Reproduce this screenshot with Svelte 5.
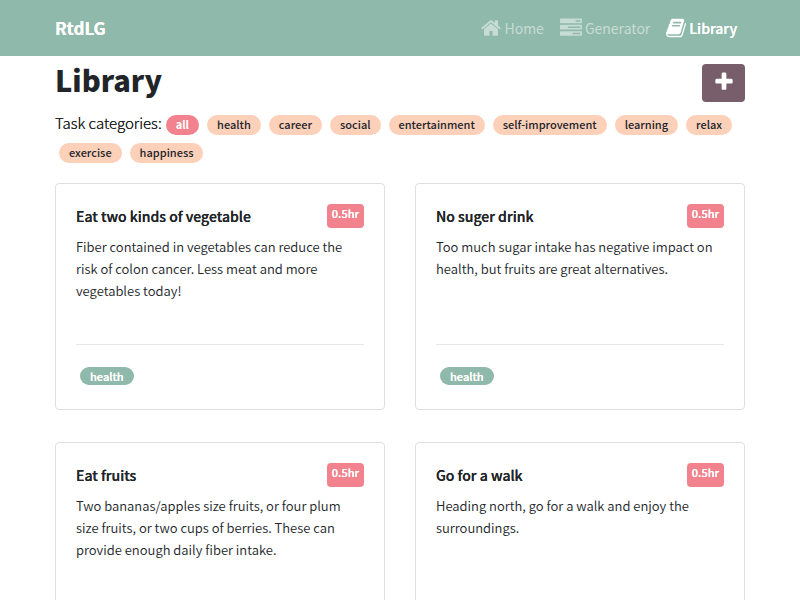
<script>
  const categories = ['all', 'health', 'career', 'social', 'entertainment', 'self-improvement', 'learning', 'relax', 'exercise', 'happiness'];
  let active = $state('all');
  const tasks = [
    { title: 'Eat two kinds of vegetable', time: '0.5hr', tag: 'health', text: 'Fiber contained in vegetables can reduce the risk of colon cancer. Less meat and more vegetables today!' },
    { title: 'No suger drink', time: '0.5hr', tag: 'health', text: 'Too much sugar intake has negative impact on health, but fruits are great alternatives.' },
    { title: 'Eat fruits', time: '0.5hr', tag: 'health', text: 'Two bananas/apples size fruits, or four plum size fruits, or two cups of berries. These can provide enough daily fiber intake.' },
    { title: 'Go for a walk', time: '0.5hr', tag: 'health', text: 'Heading north, go for a walk and enjoy the surroundings.' }
  ];
</script>

<header>
  <nav class="container">
    <a class="brand" href="#home">RtdLG</a>
    <div class="links">
      <a href="#home">
        <svg class="narrow" viewBox="64 0 1664 1792" aria-hidden="true"><path d="M1472 992v480q0 26-19 45t-45 19h-384v-384h-256v384h-384q-26 0-45-19t-19-45v-480q0-1 .5-3t.5-3l575-474 575 474q1 2 1 6zm223-69l-62 74q-8 9-21 11h-3q-13 0-21-7l-692-577-692 577q-12 8-24 7-13-2-21-11l-62-74q-8-10-7-23.500t11-21.500l719-599q32-26 76-26t76 26l244 204v-195q0-14 9-23t23-9h192q14 0 23 9t9 23v408l219 182q10 8 11 21.500t-7 23.500z" /></svg>
        Home
      </a>
      <a href="#generator">
        <svg viewBox="0 0 1792 1792" aria-hidden="true"><path d="M1024 1408h640v-128h-640v128zm-384-512h1024v-128h-1024v128zm640-512h384v-128h-384v128zm512 832v256q0 26-19 45t-45 19h-1664q-26 0-45-19t-19-45v-256q0-26 19-45t45-19h1664q26 0 45 19t19 45zm0-512v256q0 26-19 45t-45 19h-1664q-26 0-45-19t-19-45v-256q0-26 19-45t45-19h1664q26 0 45 19t19 45zm0-512v256q0 26-19 45t-45 19h-1664q-26 0-45-19t-19-45v-256q0-26 19-45t45-19h1664q26 0 45 19t19 45z" /></svg>
        Generator
      </a>
      <a class="current" href="#library" aria-current="page">
        <svg class="narrow" viewBox="64 0 1664 1792" aria-hidden="true"><path d="M1703 478q40 57 18 129l-275 906q-19 64-76.500 107.500t-122.500 43.500h-923q-77 0-148.500-53.500t-99.500-131.500q-24-67-2-127 0-4 3-27t4-37q1-8-3-21.500t-3-19.500q2-11 8-21t16.500-23.500 16.500-23.500q23-38 45-91.500t30-91.500q3-10 .5-30t-.5-28q3-11 17-28t17-23q21-36 42-92t25-90q1-9-2.500-32t.5-28q4-13 22-30.500t22-22.500q19-26 42.500-84.500t27.500-96.500q1-8-3-25.500t-2-26.500q2-8 9-18t18-23 17-21q8-12 16.500-30.500t15-35 16-36 19.500-32 26.500-23.500 36-11.500 47.500 5.500l-1 3q38-9 51-9h761q74 0 114 56t18 130l-274 906q-36 119-71.500 153.500t-128.500 34.500h-869q-27 0-38 15-11 16-1 43 24 70 144 70h923q29 0 56-15.500t35-41.500l300-987q7-22 5-57 38 15 59 43zm-1064 2q-4 13 2 22.500t20 9.500h608q13 0 25.500-9.500t16.500-22.500l21-64q4-13-2-22.500t-20-9.500h-608q-13 0-25.500 9.500t-16.500 22.500zm-83 256q-4 13 2 22.500t20 9.500h608q13 0 25.500-9.500t16.500-22.500l21-64q4-13-2-22.500t-20-9.500h-608q-13 0-25.500 9.500t-16.500 22.500z" /></svg>
        Library
      </a>
    </div>
  </nav>
</header>

<main class="container">
  <div class="heading">
    <h1>Library</h1>
    <button class="add" aria-label="Add task">
      <svg viewBox="0 0 1792 1792" aria-hidden="true"><path d="M1600 736v192q0 40-28 68t-68 28h-416v416q0 40-28 68t-68 28h-192q-40 0-68-28t-28-68v-416h-416q-40 0-68-28t-28-68v-192q0-40 28-68t68-28h416v-416q0-40 28-68t68-28h192q40 0 68 28t28 68v416h416q40 0 68 28t28 68z" /></svg>
    </button>
  </div>
  <div class="categories">
    <span>Task categories:</span>
    {#each categories as category}
      <button class="pill" class:active={active === category} aria-pressed={active === category} onclick={() => (active = category)}>{category}</button>
    {/each}
  </div>
  <div class="grid">
    {#each tasks as task}
      <article>
        <div class="top">
          <h2>{task.title}</h2>
          <span class="time">{task.time}</span>
        </div>
        <p>{task.text}</p>
        <footer><span class="tag">{task.tag}</span></footer>
      </article>
    {/each}
  </div>
</main>

<style>
  :global(body) {
    margin: 0;
    background: #fff;
    color: #212529;
    font: 300 15px/20px 'Noto Sans CJK JP', 'Noto Sans', sans-serif;
  }
  .container {
    box-sizing: border-box;
    width: 100%;
    max-width: 720px;
    margin: 0 auto;
    padding: 0 15px;
  }
  header { background: #8fb9aa; }
  nav, .links, .links a, .top { display: flex; align-items: center; }
  nav { justify-content: space-between; min-height: 56px; }
  a { color: rgba(255, 255, 255, 0.5); text-decoration: none; }
  .brand { color: #fff; font-size: 17px; font-weight: 700; text-shadow: 0 0 currentColor; }
  .links { gap: 16px; padding-right: 8px; }
  .links a { gap: 3px; font-size: 14px; font-weight: 400; }
  .links .current { color: #fff; font-weight: 500; text-shadow: 0 0 currentColor; }
  svg { width: 22px; height: 22px; fill: currentColor; }
  svg.narrow { width: 20px; }
  .heading { display: flex; justify-content: space-between; padding-top: 8px; }
  h1 { margin: 0; font-size: 29px; line-height: 30px; font-weight: 900; }
  button { border: 0; font: inherit; cursor: pointer; }
  .add {
    display: flex;
    align-items: center;
    justify-content: center;
    width: 43px;
    height: 38px;
    padding: 0;
    border-radius: 4px;
    background: #785d6b;
    color: #fff;
  }
  .add svg { margin-bottom: 2px; }
  .categories {
    display: flex;
    flex-wrap: wrap;
    row-gap: 8px;
    margin-top: 13px;
  }
  .categories span { line-height: 16px; text-shadow: 0 0 currentColor; }
  .pill, .tag {
    margin: 0 4px;
    padding: 0 10px;
    border-radius: 10px;
    font-size: 11px;
    font-weight: 500;
    line-height: 18px;
  }
  .pill { padding-bottom: 2px; background: #fdd0ba; color: #212529; }
  .pill.active { background: #f2828d; color: #fff; font-weight: 700; }
  .grid {
    display: grid;
    grid-template-columns: repeat(auto-fit, minmax(260px, 1fr));
    gap: 32px 30px;
    margin-top: 20px;
  }
  article {
    box-sizing: border-box;
    display: flex;
    flex-direction: column;
    min-height: 227px;
    padding: 20px;
    border: 1px solid #dfdfdf;
    border-radius: 4px;
  }
  .top { justify-content: space-between; }
  h2 { margin: 0; font-size: 14px; font-weight: 500; text-shadow: 0 0 currentColor; }
  .time {
    padding: 0 5px 6px;
    border-radius: 4px;
    background: #f2828d;
    color: #fff;
    font-size: 11px;
    font-weight: 500;
    line-height: 18px;
    text-shadow: 0 0 currentColor;
  }
  p { flex: 1; margin: 8px 0 0; font-size: 13px; line-height: 22px; font-weight: 350; }
  footer { display: flex; padding: 22px 0 4px; border-top: 1px solid #e5e5e5; }
  .tag { background: #8fb9aa; color: #fff; text-shadow: 0 0 currentColor; }
</style>
